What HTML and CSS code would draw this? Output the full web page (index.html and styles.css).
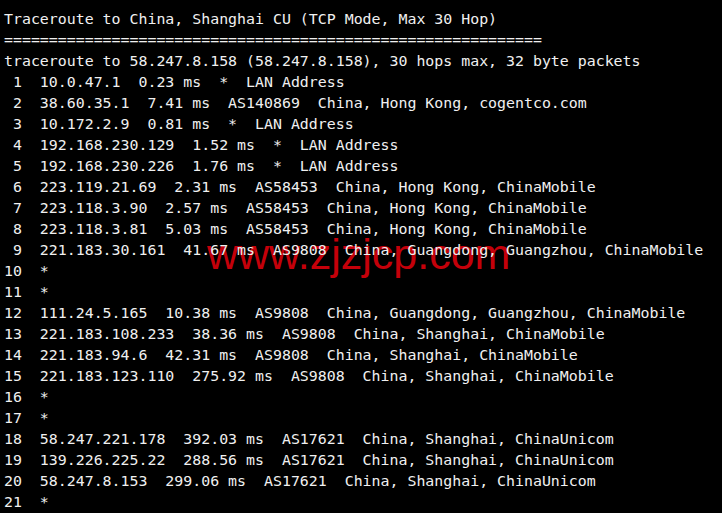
FILE: index.html
```html
<!DOCTYPE html>
<html>
<head>
<meta charset="utf-8">
<link rel="stylesheet" href="styles.css">
</head>
<body>
<div class="term">
<div class="watermark">www.zjzjcp.com</div>
<pre class="out">Traceroute to China, Shanghai CU (TCP Mode, Max 30 Hop)
============================================================
traceroute to 58.247.8.158 (58.247.8.158), 30 hops max, 32 byte packets
 1  10.0.47.1  0.23 ms  *  LAN Address
 2  38.60.35.1  7.41 ms  AS140869  China, Hong Kong, cogentco.com
 3  10.172.2.9  0.81 ms  *  LAN Address
 4  192.168.230.129  1.52 ms  *  LAN Address
 5  192.168.230.226  1.76 ms  *  LAN Address
 6  223.119.21.69  2.31 ms  AS58453  China, Hong Kong, ChinaMobile
 7  223.118.3.90  2.57 ms  AS58453  China, Hong Kong, ChinaMobile
 8  223.118.3.81  5.03 ms  AS58453  China, Hong Kong, ChinaMobile
 9  221.183.30.161  41.67 ms  AS9808  China, Guangdong, Guangzhou, ChinaMobile
10  *
11  *
12  111.24.5.165  10.38 ms  AS9808  China, Guangdong, Guangzhou, ChinaMobile
13  221.183.108.233  38.36 ms  AS9808  China, Shanghai, ChinaMobile
14  221.183.94.6  42.31 ms  AS9808  China, Shanghai, ChinaMobile
15  221.183.123.110  275.92 ms  AS9808  China, Shanghai, ChinaMobile
16  *
17  *
18  58.247.221.178  392.03 ms  AS17621  China, Shanghai, ChinaUnicom
19  139.226.225.22  288.56 ms  AS17621  China, Shanghai, ChinaUnicom
20  58.247.8.153  299.06 ms  AS17621  China, Shanghai, ChinaUnicom
21  *</pre>
</div>
</body>
</html>
```
FILE: styles.css
```css
html, body {
  margin: 0;
  padding: 0;
  background: #000;
  width: 722px;
  height: 513px;
  overflow: hidden;
}
.term {
  position: relative;
  padding: 9px 4px 0 4px;
}
.out {
  position: relative;
  z-index: 2;
  margin: 0;
  font-family: "DejaVu Sans Mono", monospace;
  font-size: 14.9px;
  line-height: 21px;
  color: #f0f0f0;
  white-space: pre;
}
.watermark {
  position: absolute;
  z-index: 1;
  left: 207px;
  top: 233px;
  font-family: "Liberation Sans", Arial, sans-serif;
  font-size: 43px;
  line-height: 1;
  color: #c4000a;
  white-space: nowrap;
}
```
